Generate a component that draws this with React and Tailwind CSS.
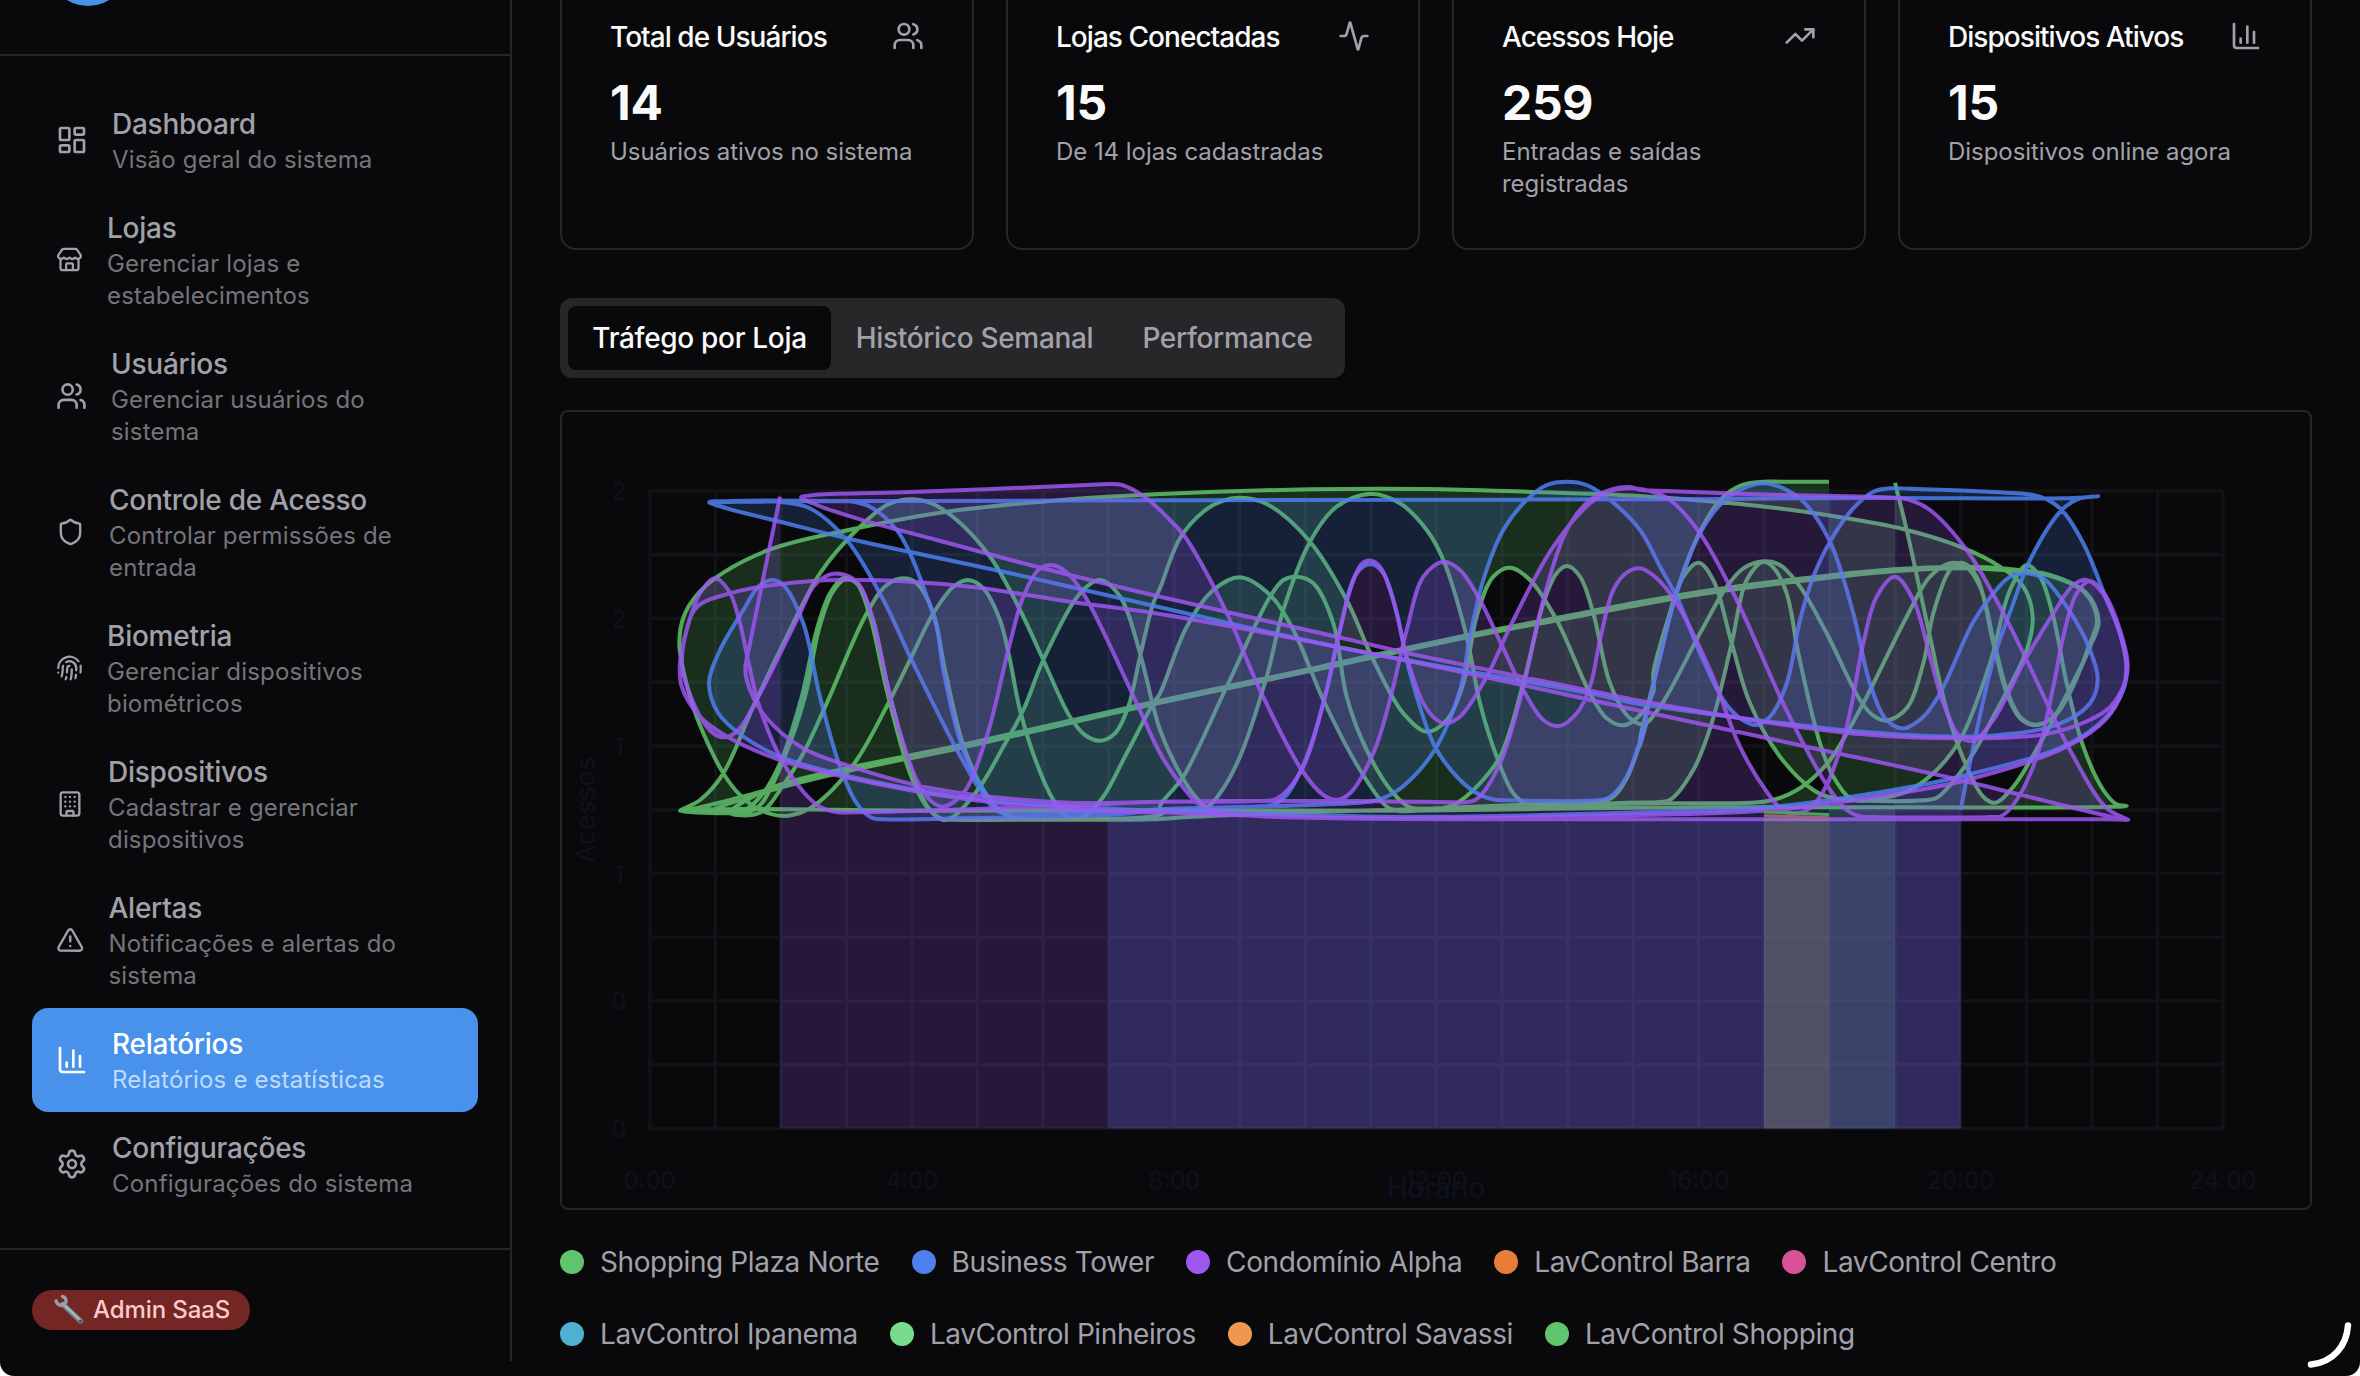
import React from 'react';
import {
  LayoutDashboard, Store, Users, Shield, Fingerprint, Building, TriangleAlert,
  ChartColumn, Settings, Activity, TrendingUp,
} from 'lucide-react';

const NAV = [
  { title: 'Dashboard', lines: ['Visão geral do sistema'], icon: LayoutDashboard, w: 'w-[32px]' },
  { title: 'Lojas', lines: ['Gerenciar lojas e', 'estabelecimentos'], icon: Store, w: 'w-[27px]' },
  { title: 'Usuários', lines: ['Gerenciar usuários do', 'sistema'], icon: Users, w: 'w-[31px]' },
  { title: 'Controle de Acesso', lines: ['Controlar permissões de', 'entrada'], icon: Shield, w: 'w-[29px]' },
  { title: 'Biometria', lines: ['Gerenciar dispositivos', 'biométricos'], icon: Fingerprint, w: 'w-[27px]' },
  { title: 'Dispositivos', lines: ['Cadastrar e gerenciar', 'dispositivos'], icon: Building, w: 'w-[28px]' },
  { title: 'Alertas', lines: ['Notificações e alertas do', 'sistema'], icon: TriangleAlert, w: 'w-[28.5px]' },
  { title: 'Relatórios', lines: ['Relatórios e estatísticas'], icon: ChartColumn, w: 'w-[32px]', active: true },
  { title: 'Configurações', lines: ['Configurações do sistema'], icon: Settings, w: 'w-[32px]' },
];

const STATS = [
  { title: 'Total de Usuários', value: '14', note: ['Usuários ativos no sistema'], icon: Users },
  { title: 'Lojas Conectadas', value: '15', note: ['De 14 lojas cadastradas'], icon: Activity },
  { title: 'Acessos Hoje', value: '259', note: ['Entradas e saídas', 'registradas'], icon: TrendingUp },
  { title: 'Dispositivos Ativos', value: '15', note: ['Dispositivos online agora'], icon: ChartColumn },
];

const LEGEND = [
  [
    ['Shopping Plaza Norte', 'bg-[#60c46c]'],
    ['Business Tower', 'bg-[#4d80ee]'],
    ['Condomínio Alpha', 'bg-[#9c57f0]'],
    ['LavControl Barra', 'bg-[#e87d38]'],
    ['LavControl Centro', 'bg-[#d85299]'],
  ],
  [
    ['LavControl Ipanema', 'bg-[#4fb0d2]'],
    ['LavControl Pinheiros', 'bg-[#78dc8a]'],
    ['LavControl Savassi', 'bg-[#ee974f]'],
    ['LavControl Shopping', 'bg-[#60c46c]'],
  ],
];

/* Series points are kept per third of the plot (A, B, C) in 1/3 px units. */
const ORIGIN = { A: [670, 470], B: [1160, 470], C: [1640, 470] };

const GREEN = `C 765,38 800,180 870,500 920,720 980,890 1030,980 1065,998 1120,950 1200,820 1290,655 1350,530 1375,450 1340,370 1230,315 1100,298 960,292 760,300 560,320 240,360 0,400
B 1200,445 900,503 450,600 0,695 A 1200,755 860,832 530,900 300,958 120,1005 30,1022
A 90,990 160,910 250,710 350,500 450,310 560,180 650,105 720,88 780,98 860,150 960,260 1050,420 1120,570 1200,740 1245,795 1290,812 1335,790 1375,710 1410,560 1450,400
B 0,355 60,205 130,125 190,92 240,83 320,102 450,215 560,390 640,570 730,730 800,785 860,750 910,640 950,440 1000,320 1050,293 1110,330 1190,450 1290,670 1340,745 1390,766 1440,735 1480,665
C 40,610 80,460 130,320 176,278 220,330 275,520 330,700 420,860 520,960 580,985 640,991 850,991 890,983 935,940 1000,850 1060,740 1160,540 1178,440 1150,350 1080,290 960,230 780,175 560,135 300,102 0,78
B 1100,65 800,57 450,58 0,72 A 1200,88 830,125 560,175 290,242 110,345 45,430 28,520 60,680 100,790 160,910 210,975 270,1020 340,1038 400,1025 460,985 560,870 660,690 720,570 790,430 850,350 895,330 940,355 990,450 1020,570 1050,720 1100,880 1150,990 1190,1042
A 1240,1040 1300,980 1370,850 1450,700 B 0,670 80,470 160,360 240,322 330,375 400,480 490,690 600,900 680,1010 710,1022 860,1012 890,1000 950,950 1020,860 1090,640 1150,400 1190,310 1222,288 1260,320 1300,430 1350,640 1405,740 1450,763
C 60,710 180,490 260,350 310,295 370,274 420,285 480,350 560,490 660,690 700,737 740,752 800,715 850,580 880,430 930,300 965,278 1010,320 1060,520 1100,670 1140,745 1185,766 1240,740 1290,660 1350,530 1376,455 1342,372 1232,318 1100,301 960,295 760,304 560,324 240,364 0,404
B 1200,449 900,506 450,603 0,698 A 1200,759 860,836 530,904 300,962 120,1025
A 220,1022 275,975 330,880 395,680 440,480 480,370 520,325 560,340 600,440 650,660 720,910 770,1010 820,1050 850,1040 930,950 1000,830 1060,720 1120,570 1230,370 1290,330 1350,380 1410,550 1450,710
B 0,780 60,910 110,985 140,1010 180,970 240,860 320,620 370,420 450,215 530,110 632,72 720,100 800,180 850,270 920,500 960,700 1010,860 1060,970 1100,1003 1130,1006 1400,998
C 60,996 90,990 160,900 215,760 275,520 320,330 370,275 400,292 440,370 475,550 540,820 580,920 640,990 720,985 800,965 880,910 960,810 1050,580 1110,360 1160,285 1200,320 1240,440 1280,640 1330,830 1390,960 1430,1003 1460,1008
C 1400,1011 700,1012 0,1013 B 760,1022 0,1020 A 800,1022 120,1018 30,1024
A 240,1024 275,1000 340,870 405,680 446,480 486,370 525,328 565,345 606,440 656,660 726,910 776,1015 815,1047 850,1049 1200,1049 1450,1048 B 100,1040 400,1028 760,1018 C 0,1000 370,995 430,980 500,940 570,870 670,700 800,440 870,320 930,280 975,287 1020,350 1063,520 1104,670 1144,745 1189,764 1244,738 1294,660 1346,530 1371,450 1336,369 1228,317 1100,296 960,290 760,298 560,317 240,356 0,396
B 1200,442 900,500 450,597 0,692 A 1200,752 860,828 530,895 300,955 180,1028
A 270,1028 350,930 400,850 470,700 590,430 650,345 700,325 740,340 790,430 825,600 885,840 960,990 1010,1036 1060,1046 1300,1047 1440,1040 1480,1028 B 0,1010 70,920 200,650 330,380 370,330 410,320 460,340 520,460 560,680 620,840 700,970 750,1012 790,1016 900,1012 1200,1000 1320,996 1360,980 1400,925 1460,755
C 0,810 60,560 110,365 180,185 245,85 305,45 370,35 420,35 567,35`;

const BLUE = `C 962,1020 1000,830 1060,570 1120,400 1170,270 1265,120 1320,85 1375,79 1300,84 700,84 0,88 B 750,89 0,91 A 700,93 200,95 118,98
A 180,93 500,93 540,94 600,110 680,180 720,250 760,350 800,470 820,600 880,840 960,990 1010,1036 1060,1038 1315,1030 B 0,1018 360,1008 600,998 640,993 700,970 770,910 830,830 900,660 930,500 970,330 1030,180 1100,90 1160,45 1220,35 1280,45 1350,90
C 0,180 60,290 115,390 180,550 250,690 300,745 350,765 390,740 440,640 480,450 520,320 570,215 640,115 700,65 750,55 810,56 1100,68 1200,80 1265,120 1330,220 1400,390 1440,490 1461,590 1450,660 1400,740 1280,825 980,915 760,960 400,1010 0,1027
B 750,1040 0,1022 A 1200,1010 870,980 520,915 330,860 220,800 145,730 117,640 150,540 220,420 265,350 305,330 340,345 400,460 450,680 510,890 560,1000 605,1043 640,1048 870,1045 1315,1035
B 0,1020 280,1010 340,1004 380,975 440,860 500,660 540,480 590,310 632,283 670,310 710,430 750,610 825,830 900,930 960,975 1005,989 1040,991 1310,991 1345,984 1400,920 1460,750
C 0,830 60,560 110,370 180,190 250,95 310,55 370,40 430,55 490,95 570,215 640,430 690,640 740,750 790,775 850,740 900,670 1000,455 1060,370 1110,320 1160,310 1210,325 1280,410 1350,540 1373,630 1350,700 1250,765 1080,795 950,800 660,785 390,755 0,702
B 1290,670 530,530 0,412 A 1000,305 530,205 330,155 170,115 118,96
A 180,94 330,96 420,115 530,210 640,390 720,560 850,820 930,960 980,1022 1030,1032 1150,1030 1315,1020`;

const PURPLE = `A 330,80 240,520 226,600 240,660 290,745 400,835 560,895 800,958 1200,998 B 0,995 280,993 350,986 425,900 490,700 535,500 570,360 605,282 632,272 660,290 700,390 740,560 790,700 830,750 855,760 900,740 980,620 1060,450 1180,230 1290,100 1350,64 1410,55
C 40,66 90,90 180,190 290,390 420,680 500,840 560,945 620,1020 655,1038 700,1041 1050,1041 1085,1038 1130,990 1190,860 1240,650 1270,500 1310,370 1350,333 1392,370 1440,480 1463,590 1445,660 1400,720 1300,770 1200,795 950,805 660,792 390,758 0,692
B 1290,662 730,547 530,500 0,380 A 1100,290 800,210 560,145 440,105 393,82 430,75
A 700,67 1250,45 1320,42 1360,46 1430,85 1500,150 B 75,200 140,310 210,450 300,660 425,900 490,975 530,990 570,970 640,850 690,690 740,480 790,320 850,275 900,300 960,390 1025,525 1090,660 1150,750 1197,768 1250,730 1290,650 1320,510 1360,360 1400,308 1440,295
C 50,325 110,400 210,600 300,830 380,965 430,1022 470,1030 510,1015 560,945 620,770 670,520 710,380 765,320 820,390 870,560 910,700 960,800 1000,812 1060,750 1155,570 1240,430 1300,345 1340,330 1388,370 1436,480 1459,590 1448,660 1400,745 1280,830 980,930 760,972 400,1020 0,1035
B 750,1046 300,1038 0,1027 A 1200,1017 870,985 520,920 330,870 180,805 90,740 35,650 30,580 50,480 90,370 135,325 175,360 205,440 232,560 265,700 330,860 400,965 450,1010 500,1026 550,1027 900,1018 1200,1007
B 0,995 600,993 880,997 915,997 950,987 1020,880 1090,650 1150,390 1220,180 1290,90 1360,57 1410,51
C 0,59 60,62 400,74 760,83 810,90 870,120 980,240 1080,410 1160,570 1290,840 1400,1015 1465,1050 1380,1033 960,930 500,830 0,722
B 730,570 0,432 A 1200,395 900,350 600,330 390,336 180,370 80,412 45,500 37,590 85,730 130,790 165,802 205,780 265,680 390,430 430,350 475,315 510,311 560,335 606,440 665,700 740,930 785,995 820,1010 880,970 950,800 1015,540 1060,380 1105,300 1145,285 1185,303 1240,370 1400,700
B 0,850 60,940 120,1005 200,1030 500,1044 C 0,1048 700,1048 1400,1048 1465,1049 1400,1048 962,1048`;

function points(src) {
  const out = [];
  let o = ORIGIN.A;
  src.trim().split(/\s+/).forEach((t) => {
    if (ORIGIN[t]) { o = ORIGIN[t]; return; }
    const [x, y] = t.split(',').map(Number);
    out.push([o[0] + x / 3, o[1] + y / 3]);
  });
  return out;
}

/* Centripetal Catmull-Rom spline converted to cubic segments. */
function spline(p) {
  const d = (a, b) => Math.max(0.3, Math.sqrt(Math.hypot(a[0] - b[0], a[1] - b[1])));
  const f = (n) => n.toFixed(1);
  let s = `M${f(p[0][0])},${f(p[0][1])}`;
  for (let i = 0; i < p.length - 1; i++) {
    const p0 = p[i - 1] || p[i], p1 = p[i], p2 = p[i + 1], p3 = p[i + 2] || p[i + 1];
    const a = d(p0, p1), b = d(p1, p2), c = d(p2, p3);
    const c1 = [0, 1].map((k) => (i === 0 ? p1[k] : (a * a * p2[k] - b * b * p0[k] + (2 * a * a + 3 * a * b + b * b) * p1[k]) / (3 * a * (a + b))));
    const c2 = [0, 1].map((k) => (i === p.length - 2 ? p2[k] : (c * c * p1[k] - b * b * p3[k] + (2 * c * c + 3 * c * b + b * b) * p2[k]) / (3 * c * (c + b))));
    s += `C${f(c1[0])},${f(c1[1])} ${f(c2[0])},${f(c2[1])} ${f(p2[0])},${f(p2[1])}`;
  }
  return s;
}

const BASE = 1128.5;
const SERIES = [
  { pts: points(GREEN), color: '#60c46c' },
  { pts: points(BLUE), color: '#4d80ee' },
  { pts: points(PURPLE), color: '#9c57f0' },
].map((s) => {
  const line = spline(s.pts);
  return { ...s, line, area: `${line}L${s.pts[s.pts.length - 1][0]},${BASE}L${s.pts[0][0]},${BASE}Z` };
});

function TrafficChart() {
  return (
    <svg className="block h-[796px] w-[1748px] font-['Inter',sans-serif]" viewBox="562 412 1748 796">
      <g stroke="#131317" strokeWidth="3.4">
        {Array.from({ length: 25 }, (_, i) => <line key={i} x1={649.8 + i * 65.55} x2={649.8 + i * 65.55} y1="491" y2={BASE} />)}
        {Array.from({ length: 11 }, (_, i) => <line key={i} x1="649.8" x2="2223" y1={491 + i * 63.75} y2={491 + i * 63.75} />)}
      </g>
      {SERIES.map((s) => (
        <g key={s.color}>
          <path d={s.area} fill={s.color} fillOpacity="0.2" />
          <path d={s.line} fill="none" stroke={s.color} strokeOpacity="0.84" strokeWidth="4" />
        </g>
      ))}
      <path d={`M1764,813 L1829,815 V${BASE} H1764Z`} fill="#98a479" fillOpacity="0.3" />
      <path d="M1764,815.5 L1829,817.5" stroke="#a4607a" strokeWidth="2.5" />
      <path d="M1764,812 L1829,814.5" stroke="#4f9f5c" strokeWidth="3" />
      <g fill="#0d1120" fontSize="24" textAnchor="middle">
        {['0:00', '4:00', '8:00', '12:00', '16:00', '20:00', '24:00'].map((t, i) => (
          <text key={t} x={649.8 + i * 262.2} y="1189">{t}</text>
        ))}
        {['2', '2', '1', '1', '0', '0'].map((t, i) => (
          <text key={i} x="619" y={500 + i * 127.5}>{t}</text>
        ))}
        <text x="1436" y="1198" fontSize="28">Horário</text>
        <text transform="translate(595 810) rotate(-90)" fontSize="26.5">Acessos</text>
      </g>
    </svg>
  );
}

function NavItem({ title, lines, icon: Icon, w, active }) {
  return (
    <div className={`flex items-center gap-6 rounded-2xl px-6 py-4 ${active ? 'bg-[#4892ec]' : ''}`}>
      <Icon className={`h-8 shrink-0 ${w} ${active ? 'text-white' : 'text-[#a1a1aa]'}`} />
      <div className="whitespace-nowrap">
        <div className={`pt-px text-[28px] leading-[39px] font-medium tracking-[-0.25px] ${active ? 'text-white' : 'text-[#a1a1aa]'}`}>{title}</div>
        {lines.map((l) => (
          <div key={l} className={`text-[24px] leading-8 tracking-[0.18px] ${active ? 'text-[#bfdbfe]' : 'text-[#74747b]'}`}>{l}</div>
        ))}
      </div>
    </div>
  );
}

function Wrench() {
  return (
    <svg className="h-[32px] w-[32px]" viewBox="0 0 32 32" fill="none">
      <path d="M10 10.5 L27.5 27" stroke="#6d7a82" strokeWidth="5.4" strokeLinecap="round" />
      <path d="M9.5 9.5 L27 26" stroke="#a9b4ba" strokeWidth="2.6" strokeLinecap="round" />
      <path d="M3 6.8 C4 10.8 8.4 12.4 11.4 10.2 C14 7.8 13.6 3.8 9.4 2.4" stroke="#93a0a7" strokeWidth="3.4" strokeLinecap="round" />
      <circle cx="27.3" cy="26.8" r="1.2" fill="#742624" />
    </svg>
  );
}

export default function App() {
  return (
    <div className="h-[1376px] w-[2360px] overflow-hidden bg-white font-['Inter',sans-serif]">
      <div className="relative flex h-full w-full overflow-hidden rounded-b-[14px] bg-[#09090b]">
        <aside className="flex h-[1361px] w-[512px] shrink-0 flex-col border-r-2 border-[#27272a]">
          <div className="h-[56px] shrink-0 overflow-hidden border-b-2 border-[#27272a] px-12">
            <div className="-mt-[74px] h-20 w-20 rounded-full bg-[#4892ec]" />
          </div>
          <nav className="flex flex-col p-8">
            {NAV.map((n) => <NavItem key={n.title} {...n} />)}
          </nav>
          <div className="flex border-t-2 border-[#27272a] px-8 pt-10">
            <div className="flex h-10 w-[218px] items-center rounded-full bg-[#742624] pl-[21px]">
              <Wrench />
              <span className="ml-[8px] text-[24px] font-medium tracking-[-0.1px] whitespace-nowrap text-[#fbcbca]">Admin SaaS</span>
            </div>
          </div>
        </aside>

        <main className="ml-12 flex w-[1752px] shrink-0 flex-col">
          <section className="grid h-[250px] shrink-0 grid-cols-4 gap-8">
            {STATS.map(({ title, value, note, icon: Icon }) => (
              <div key={title} className="-mt-8 rounded-2xl border-2 border-[#27272a] px-12 pt-[46px]">
                <div className="flex h-10 items-center justify-between">
                  <h3 className="pt-px text-[28px] font-medium tracking-[-0.96px] whitespace-nowrap text-[#fafafa]">{title}</h3>
                  <Icon className="size-8 text-[#a1a1aa]" />
                </div>
                <div className="mt-[15px] mb-px text-[48px] leading-[64px] font-bold tracking-[-0.3px] text-[#fafafa]">{value}</div>
                {note.map((l) => (
                  <div key={l} className="text-[24px] leading-8 tracking-[-0.05px] whitespace-nowrap text-[#a1a1aa]">{l}</div>
                ))}
              </div>
            ))}
          </section>

          <div className="mt-12 flex h-20 w-[785px] shrink-0 rounded-xl bg-[#27272a] p-2 text-[28px] font-medium tracking-[-0.32px] whitespace-nowrap text-[#a1a1aa]">
            <div className="flex w-[263px] items-center justify-center rounded-lg bg-[#09090b] text-[#fafafa]">Tráfego por Loja</div>
            <div className="flex w-[287px] items-center justify-center">Histórico Semanal</div>
            <div className="flex w-[219px] items-center justify-center">Performance</div>
          </div>

          <section className="mt-8 h-[800px] w-[1752px] shrink-0 rounded-lg border-2 border-[#27272a]">
            <TrafficChart />
          </section>

          <div className="mt-8 flex flex-col gap-8">
            {LEGEND.map((row, i) => (
              <div key={i} className="flex h-10 items-center gap-8">
                {row.map(([name, dot]) => (
                  <div key={name} className="flex items-center gap-4">
                    <span className={`size-6 rounded-full ${dot}`} />
                    <span className="text-[28px] leading-10 tracking-[-0.4px] whitespace-nowrap text-[#a1a1aa]">{name}</span>
                  </div>
                ))}
              </div>
            ))}
          </div>
        </main>

        <svg className="absolute right-0 bottom-0 h-[60px] w-[60px]" viewBox="0 0 60 60" fill="none">
          <path d="M48 9.5 C46.5 30 33 46.5 11 48.5" stroke="#fff" strokeWidth="6.5" strokeLinecap="round" />
        </svg>
      </div>
    </div>
  );
}
